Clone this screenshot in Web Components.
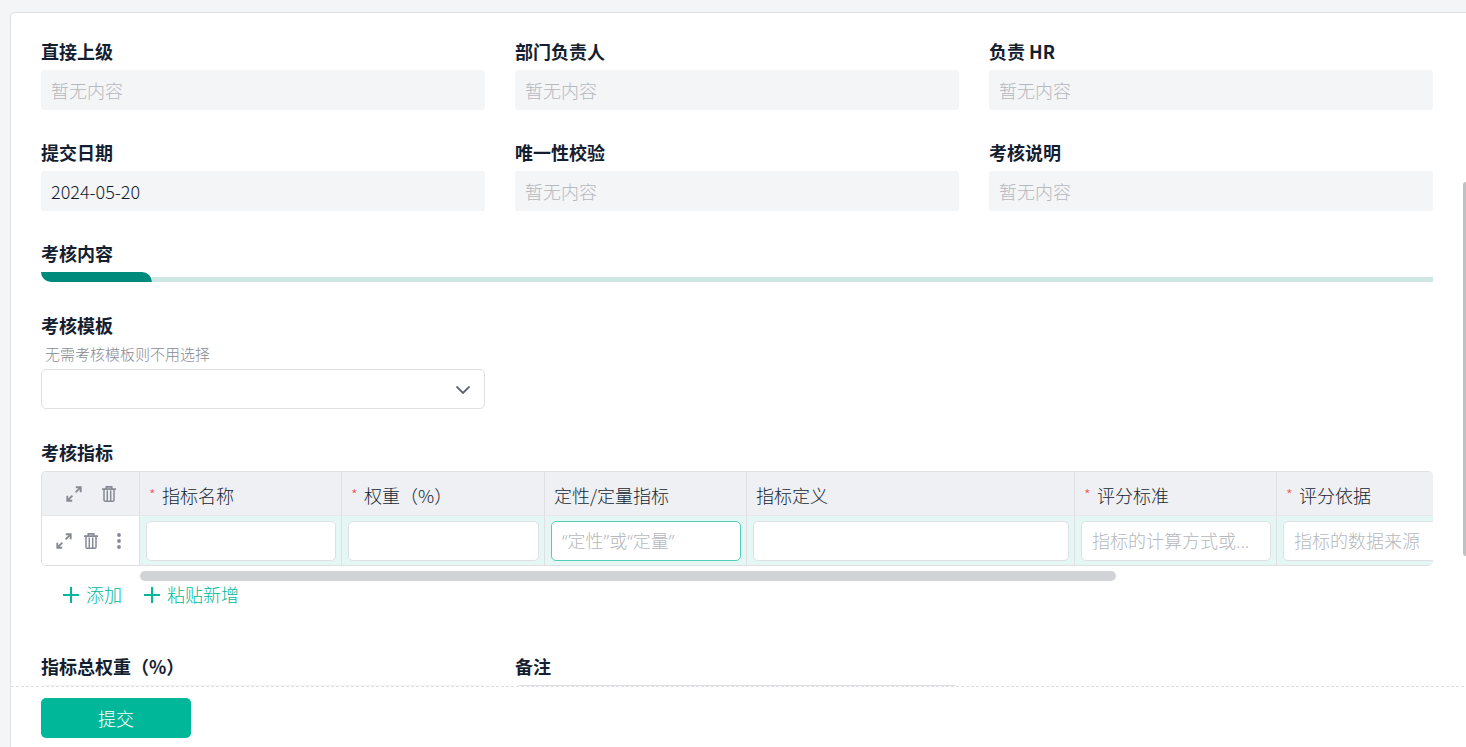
<!DOCTYPE html>
<html lang="zh-CN">
<head>
<meta charset="utf-8">
<title>考核表单</title>
<style>
  html, body { margin: 0; height: 100%; }
  body {
    --line: #dfe0e3; --soft: #f4f5f7; --ink: #141e31; --muted: #b5b8be; --brand: #00b899;
    background: var(--soft); color: var(--ink);
    font-family: "Noto Sans CJK SC", "Noto Sans", sans-serif;
    font-size: 18px; font-weight: 300; line-height: 26px; overflow: hidden;
  }
  .row { display: grid; grid-template-columns: repeat(3, minmax(0, 1fr)); gap: 30px; }
  .stack { display: grid; gap: 31px; margin-top: 31px; }
  section-title { margin-top: 30px; }
</style>
</head>
<body>
<form-page>
  <div class="row">
    <form-field label="直接上级" readonly></form-field>
    <form-field label="部门负责人" readonly></form-field>
    <form-field label="负责 HR" readonly></form-field>
    <form-field label="提交日期" value="2024-05-20" readonly></form-field>
    <form-field label="唯一性校验" readonly></form-field>
    <form-field label="考核说明" readonly></form-field>
  </div>
  <section-title>考核内容</section-title>
  <div class="stack">
    <div class="row"><select-field label="考核模板" hint="无需考核模板则不用选择"></select-field></div>
    <indicator-table label="考核指标"></indicator-table>
    <div class="row">
      <form-field label="指标总权重（%）" readonly></form-field>
      <form-field label="备注"></form-field>
    </div>
  </div>
  <submit-button slot="footer">提交</submit-button>
</form-page>

<script>
const base = `
  * { box-sizing: border-box; }
  button, input, select { font: inherit; color: inherit; margin: 0; }
  button { border: 0; padding: 0; background: none; cursor: pointer; }
  input, select { width: 100%; height: 40px; padding: 0 10px; border: 1px solid var(--line); border-radius: 5px; background: #fff; outline: 0; display: block; }
  input::placeholder { color: var(--muted); opacity: 1; }
  .label { display: block; font-weight: 700; line-height: 25px; margin: 0 0 6px; }
  svg { display: block; fill: none; stroke: currentColor; }
`;
const icons = {
  expand: `<svg width="16" height="16" viewBox="0 0 16 16" stroke-width="1.9"><path d="M9.600 6.400 14.300 1.700M9.800 1.300H14.700V6.200M6.400 9.600 1.700 14.300M1.300 9.800V14.700H6.200"/></svg>`,
  trash: `<svg width="14" height="16" viewBox="0 0 14 16" stroke-width="1.500"><path stroke-width="1.700" d="M0 3.200H14M4.300 3V.900H9.700V3"/><path d="M2 3.500V14Q2 15.200 3.200 15.200H10.800Q12 15.200 12 14V3.500M5.300 4.500V15M8.700 4.500V15"/></svg>`,
  more: `<svg width="4" height="16" viewBox="0 0 4 16"><g fill="currentColor" stroke="none"><circle cx="2" cy="2" r="1.900"/><circle cx="2" cy="8" r="1.900"/><circle cx="2" cy="14" r="1.900"/></g></svg>`,
  plus: `<svg width="16" height="16" viewBox="0 0 16 16" stroke-width="2"><path d="M8 0V16M0 8H16"/></svg>`
};
class Base extends HTMLElement {
  connectedCallback() {
    if (this.shadowRoot) return;
    this.attachShadow({ mode: 'open' }).innerHTML = `<style>${base}${this.css()}</style>${this.html()}`;
  }
}
customElements.define('form-page', class extends Base {
  css() { return `
    :host { display: block; height: 100vh; padding: 12px 0 0 10px; box-sizing: border-box; }
    .card { position: relative; height: 100%; display: flex; flex-direction: column; background: #fff; border: 1px solid var(--line); border-right: 0; border-bottom: 0; border-radius: 5px 0 0 0; }
    main { flex: 1; min-height: 0; overflow: hidden; padding: 26px 33px 0 30px; }
    footer { border-top: 1px dashed var(--line); padding: 11px 30px 9px; margin-right: 2px; }
    .thumb { position: absolute; right: 0; top: 23%; height: 51%; width: 3px; background: #bfc1c6; border-radius: 3px 0 0 3px; }
  `; }
  html() { return `<div class="card"><main><slot></slot></main><footer><slot name="footer"></slot></footer><div class="thumb"></div></div>`; }
});
customElements.define('form-field', class extends Base {
  css() { return `
    :host { display: block; min-width: 0; }
    input[readonly] { background: var(--soft); border-color: var(--soft); border-radius: 3px; padding: 0 9px; }
  `; }
  html() {
    const ro = this.hasAttribute('readonly');
    return `<label class="label" for="f">${this.getAttribute('label')}</label>
      <input id="f" type="text" ${ro ? 'readonly placeholder="暂无内容"' : ''} value="${this.getAttribute('value') || ''}">`;
  }
});
customElements.define('section-title', class extends Base {
  css() { return `
    :host { display: block; }
    h2 { font-size: 18px; }
    .bar { height: 10px; background: linear-gradient(#cee7e3, #cee7e3) bottom / 100% 5px no-repeat; }
    .mark { width: 8%; height: 10px; background: #fff; }
    .mark i { display: block; height: 10px; background: #008a7c; border-radius: 0 10px 0 10px; }
  `; }
  html() { return `<h2 class="label"><slot></slot></h2><div class="bar"><div class="mark"><i></i></div></div>`; }
});
customElements.define('select-field', class extends Base {
  css() { return `
    :host { display: block; min-width: 0; }
    .hint { margin: 0 0 6px; padding-left: 4px; font-size: 15px; line-height: 19px; color: #868a92; }
    .box { display: grid; align-items: center; }
    .box > * { grid-area: 1 / 1; }
    select { appearance: none; padding-right: 36px; }
    svg { justify-self: end; margin: 2px 15px 0 0; pointer-events: none; color: #5b6070; }
  `; }
  html() { return `<label class="label" for="s">${this.getAttribute('label')}</label>
    <p class="hint">${this.getAttribute('hint')}</p>
    <div class="box"><select id="s"><option></option></select>
    <svg width="14" height="8" viewBox="0 0 14 8" stroke-width="1.800"><path d="M.5.500 7 7 13.500.500"/></svg></div>`; }
});
customElements.define('indicator-table', class extends Base {
  css() { return `
    :host { display: block; min-width: 0; }
    h3 { font-size: 18px; }
    .frame { overflow: hidden; border: 1px solid var(--line); border-right: 0; border-radius: 5px; }
    table { table-layout: fixed; width: 1437px; border-collapse: separate; border-spacing: 0; }
    th, td { border-right: 1px solid var(--line); padding: 0; }
    th { height: 44px; background: #eff0f4; border-bottom: 1px solid #e6e7eb; font-weight: inherit; text-align: left; }
    th.name { padding: 2px 8px 0 9px; }
    th label { display: flex; align-items: center; }
    th i { width: 13px; color: #f25555; font-style: normal; font-size: 15px; }
    td { height: 49px; background: #e5f7f4; padding: 0 5px 0 6px; }
    td.tools { background: #fff; padding: 0 5px 0 0; }
    .icons { display: flex; align-items: center; justify-content: center; gap: 20px; color: #868a95; }
    .tools .icons { gap: 12px; }
    .tools .icons button:last-child { margin-left: 7px; }
    input { font-family: "Noto Sans", "Noto Sans CJK SC", sans-serif; text-overflow: ellipsis; }
    input.active { border-color: #54cdb8; }
    .scroll { margin: 5px 0 0 99px; height: 10px; }
    .scroll div { width: 976px; max-width: 100%; height: 10px; border-radius: 5px; background: #d2d3d7; }
    .actions { display: flex; gap: 22px; padding: 0 0 15px 22px; color: var(--brand); }
    .actions button { display: flex; align-items: center; gap: 7px; line-height: 27px; }
  `; }
  html() {
    const cols = [
      ['指标名称', 202, 1, ''], ['权重（%）', 203, 1, ''], ['定性/定量指标', 202, 0, '“定性”或“定量”'],
      ['指标定义', 328, 0, ''], ['评分标准', 202, 1, '指标的计算方式或...'], ['评分依据', 202, 1, '指标的数据来源']
    ];
    const btn = (n, t) => `<button type="button" aria-label="${t}">${icons[n]}</button>`;
    return `<h3 class="label">${this.getAttribute('label')}</h3>
      <div class="frame"><table>
        <colgroup><col style="width:98px">${cols.map(c => `<col style="width:${c[1]}px">`).join('')}</colgroup>
        <thead><tr><th><div class="icons">${btn('expand', '展开')}${btn('trash', '删除')}</div></th>
        ${cols.map((c, i) => `<th class="name" scope="col"><label for="c${i}">${c[2] ? '<i>*</i>' : ''}<span>${c[0]}</span></label></th>`).join('')}</tr></thead>
        <tbody><tr><td class="tools"><div class="icons">${btn('expand', '展开')}${btn('trash', '删除')}${btn('more', '更多')}</div></td>
        ${cols.map((c, i) => `<td><input id="c${i}" type="text" placeholder="${c[3]}" class="${i === 2 ? 'active' : ''}"></td>`).join('')}</tr></tbody>
      </table></div>
      <div class="scroll"><div></div></div>
      <div class="actions"><button type="button">${icons.plus}<span>添加</span></button><button type="button">${icons.plus}<span>粘贴新增</span></button></div>`;
  }
});
customElements.define('submit-button', class extends Base {
  css() { return `
    :host { display: block; }
    button { display: block; width: 150px; height: 40px; border-radius: 5px; background: var(--brand); color: #fff; }
  `; }
  html() { return `<button type="submit"><slot></slot></button>`; }
});
</script>
</body>
</html>
